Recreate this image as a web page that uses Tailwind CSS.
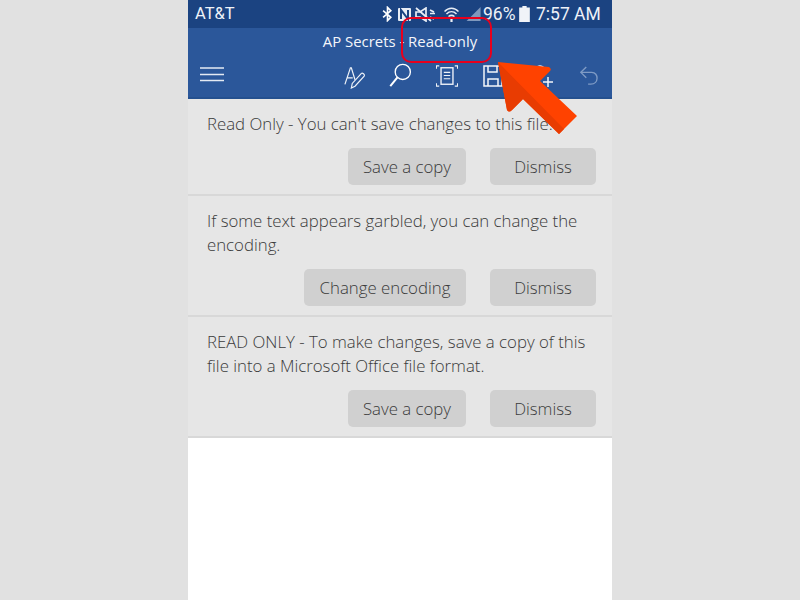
<!DOCTYPE html>
<html>
<head>
<meta charset="utf-8">
<script src="https://cdn.jsdelivr.net/npm/@tailwindcss/browser@4"></script>
</head>
<body class="bg-[#e1e1e1] font-['Open_Sans','Noto_Sans',sans-serif]">
<div class="relative w-[800px] h-[600px] overflow-hidden bg-[#e1e1e1] flex justify-center">
  <main class="w-[424px] h-[600px] bg-white flex flex-col">
    <div class="relative h-[28px] bg-[#1b4381] text-[#eef2f8] font-['Roboto'] text-[17px] leading-none">
      <span class="absolute left-[7px] top-[6px] text-[16.500px]">AT&amp;T</span>
      <svg width="11" height="16" viewBox="0 0 10 14" class="absolute left-[194px] top-[6px]" fill="none" stroke="#fff" stroke-width="1.500"><path d="M1 4l7 6-3 3V1l3 3-7 6"/></svg>
      <svg width="15" height="15" viewBox="0 0 15 15" class="absolute left-[209px] top-[7px]" fill="none"><rect x="1" y="1" width="13" height="13" rx="1" fill="#e8edf5"/><path d="M4 12V3l7 9V3" stroke="#1b4381" stroke-width="2"/></svg>
      <svg width="21" height="15" viewBox="0 0 21 15" class="absolute left-[227px] top-[7px]" fill="none" stroke="#e8edf5" stroke-width="1.700"><path d="M1 5v5h4l6 4V1L5 5z"/><path d="M1 1l15 13M15 3l4 2M15 10l4 2M15 6.500h5"/></svg>
      <svg width="15" height="15" viewBox="0 0 15 15" class="absolute left-[256px] top-[7px]" fill="none" stroke="#e8edf5" stroke-width="1.500"><path d="M0.500 4.500c4-4.500 10-4.500 14 0M2.500 7c3-3 7-3 10 0M4.500 9.500c2-1.500 4-1.500 6 0"/><path d="M7.500 11v4" stroke-width="2.200"/></svg>
      <svg width="16" height="14" viewBox="0 0 14 13" class="absolute left-[277px] top-[7px]"><path d="M1 13L14 0v13z" fill="#7f98bd"/></svg>
      <span class="absolute left-[295px] top-[6px] text-[17.500px]">96%</span>
      <svg width="11" height="16" viewBox="0 0 10 15" class="absolute left-[331px] top-[6px]"><path d="M3 0h4v1.500h3V15H0V1.500h3z" fill="#f0f3f8"/></svg>
      <span class="absolute left-[348px] top-[6px] text-[17.500px]">7:57 AM</span>
    </div>
    <header class="h-[71px] bg-[#2b579a] border-b-2 border-[#24508f] flex flex-col">
      <div class="h-[26px] flex justify-center items-center text-[#f4f6fa] text-[14.900px]">AP Secrets - Read-only</div>
      <div class="relative flex-1">
        <svg width="26" height="16" viewBox="0 0 26 16" class="absolute left-[12px] top-[12px]" stroke="#e4eaf3" stroke-width="1.500"><path d="M0 2h24M0 8.500h24M0 14.500h24"/></svg>
        <svg width="22" height="24" viewBox="0 0 24 26" class="absolute left-[156px] top-[11px]" fill="none" stroke="#eef2f8" stroke-width="1.300"><path d="M1 21L7 3h1l4 13M3.500 14h6"/><path d="M8 25l1-5L19 9c1-1 4 1 3 3L12 23z"/></svg>
        <svg width="26" height="25" viewBox="0 0 26 28" class="absolute left-[200px] top-[9px]" fill="none" stroke="#fff"><circle cx="15" cy="10" r="8.500" stroke-width="1.500"/><path d="M9 16L1 26" stroke-width="2.200"/></svg>
        <svg width="22" height="22" viewBox="0 0 23 24" class="absolute left-[248px] top-[11px]" fill="none" stroke="#eef2f8" stroke-width="1.200"><rect x="5" y="3" width="13" height="18" stroke-width="1.500"/><path d="M8 8h7M8 11.500h7M8 15h7" /><path d="M0 4V1h3M20 1h3v3M0 20v3h3M20 23h3v-3"/></svg>
        <svg width="20" height="22" viewBox="0 0 20 22" class="absolute left-[295px] top-[11px]" fill="none" stroke="#f4f6fa" stroke-width="1.500"><path d="M1 1h15l3 3v17H1z"/><path d="M5 1v6h9V1M5 21v-7h10v7"/></svg>
        <svg width="22" height="24" viewBox="0 0 22 24" class="absolute left-[344px] top-[10px]" fill="none" stroke="#f4f6fa" stroke-width="1.500"><circle cx="8" cy="7" r="5"/><path d="M11 18h10M16 13v10" stroke-width="1.500"/></svg>
        <svg width="20" height="22" viewBox="0 0 22 22" class="absolute left-[391px] top-[11px]" fill="none" stroke="#7f9bc5" stroke-width="1.500"><path d="M8 1L2 7l6 6"/><path d="M2 7h12c8 0 8 13-1 13h-3"/></svg>
      </div>
    </header>
    <section class="h-[97px] bg-[#e6e6e6] border-b-2 border-[#d8d8d8] px-[19px] pt-[13px] text-[#3a3a3a] font-light text-[16.800px] leading-[24px] flex flex-col">
      <p>Read Only - You can't save changes to this file.</p>
      <div class="flex justify-end gap-[24px] mt-[12px] mr-[-3px]">
        <button class="h-[37px] w-[118px] rounded-[5px] bg-[#d0d0d0] text-center">Save a copy</button>
        <button class="h-[37px] w-[106px] rounded-[5px] bg-[#d0d0d0] text-center">Dismiss</button>
      </div>
    </section>
    <section class="h-[121px] bg-[#e6e6e6] border-b-2 border-[#d8d8d8] px-[19px] pt-[13px] text-[#3a3a3a] font-light text-[16.800px] leading-[24px] flex flex-col">
      <p>If some text appears garbled, you can change the encoding.</p>
      <div class="flex justify-end gap-[24px] mt-[12px] mr-[-3px]">
        <button class="h-[37px] w-[162px] rounded-[5px] bg-[#d0d0d0] text-center">Change encoding</button>
        <button class="h-[37px] w-[106px] rounded-[5px] bg-[#d0d0d0] text-center">Dismiss</button>
      </div>
    </section>
    <section class="h-[121px] bg-[#e6e6e6] border-b-2 border-[#d8d8d8] px-[19px] pt-[13px] text-[#3a3a3a] font-light text-[16.800px] leading-[24px] flex flex-col">
      <p>READ ONLY - To make changes, save a copy of this file into a Microsoft Office file format.</p>
      <div class="flex justify-end gap-[24px] mt-[12px] mr-[-3px]">
        <button class="h-[37px] w-[118px] rounded-[5px] bg-[#d0d0d0] text-center">Save a copy</button>
        <button class="h-[37px] w-[106px] rounded-[5px] bg-[#d0d0d0] text-center">Dismiss</button>
      </div>
    </section>
  </main>
  <div class="absolute left-[401px] top-[17px] w-[91px] h-[46px] rounded-[10px] border-2 border-[#e8001c]"></div>
  <svg class="absolute left-0 top-0" width="800" height="600" viewBox="0 0 800 600">
    <path d="M498 62L549 67Q552 69 550 71L540 81L577 116L559 134L523 99L512 110Q509 113 507 110Z" fill="#ff4200"/>
    <path d="M498 62L564 129L559 134L523 99L512 110Q509 113 507 110Z" fill="#e83c02"/>
  </svg>
</div>
</body>
</html>
